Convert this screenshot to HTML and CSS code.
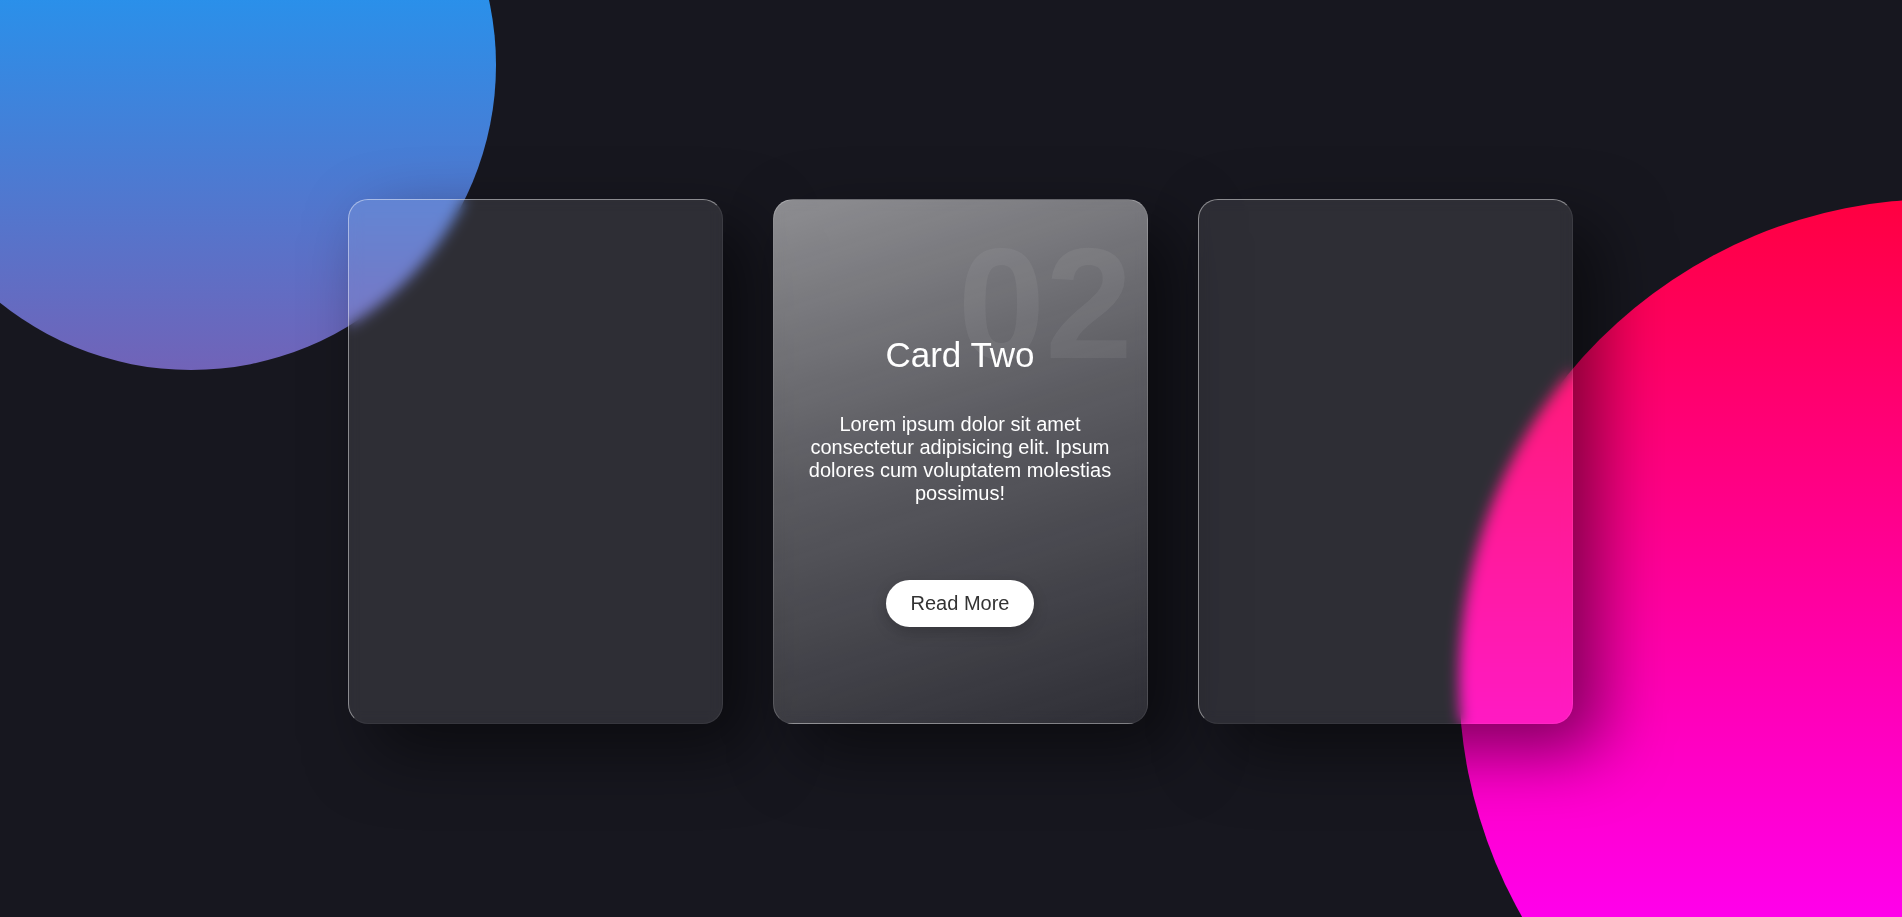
FILE: index.html
```html
<!DOCTYPE html>
<html lang="en">
<head>
<meta charset="utf-8">
<title>Glass Cards</title>
<link rel="stylesheet" href="styles.css">
</head>
<body>
  <div class="blob blob-blue"></div>
  <div class="blob blob-pink"></div>
  <main class="stage">
    <div class="cards">
      <div class="card"></div>
      <div class="card card-active">
        <span class="card-num">02</span>
        <h3 class="card-title">Card Two</h3>
        <p class="card-text">Lorem ipsum dolor sit amet consectetur adipisicing elit. Ipsum dolores cum voluptatem molestias possimus!</p>
        <a class="card-btn" href="#">Read More</a>
      </div>
      <div class="card"></div>
    </div>
  </main>
</body>
</html>
```

FILE: styles.css
```css
* {
  box-sizing: border-box;
}

html, body {
  margin: 0;
  padding: 0;
  height: 100%;
}

body {
  background: #17171f;
  font-family: "Liberation Sans", Arial, sans-serif;
  overflow: hidden;
  position: relative;
}

.blob {
  position: absolute;
  border-radius: 50%;
  z-index: 0;
}

.blob-blue {
  left: -114px;
  top: -240px;
  width: 610px;
  height: 610px;
  background: linear-gradient(to bottom, #2a90ea 0%, #2a90ea 39%, #7163b8 100%);
}

.blob-pink {
  left: 1459px;
  top: 199px;
  width: 960px;
  height: 960px;
  background: linear-gradient(to bottom, #ff0040 0%, #ff00f2 78%, #ff00ff 100%);
}

.stage {
  position: relative;
  z-index: 1;
  height: 100vh;
  display: flex;
  align-items: center;
  justify-content: center;
  padding: 6px 0 0 18px;
}

.cards {
  display: flex;
  gap: 50px;
}

.card {
  position: relative;
  width: 375px;
  height: 525px;
  border-radius: 20px;
  background: rgba(255, 255, 255, 0.1);
  border-top: 1px solid rgba(255, 255, 255, 0.45);
  border-left: 1px solid rgba(255, 255, 255, 0.45);
  border-right: 1px solid rgba(255, 255, 255, 0.08);
  border-bottom: 1px solid rgba(255, 255, 255, 0.05);
  box-shadow: 27px 27px 67px rgba(0, 0, 0, 0.5);
  backdrop-filter: blur(7px);
  -webkit-backdrop-filter: blur(7px);
  display: flex;
  flex-direction: column;
  align-items: center;
  padding: 135px 27px 0;
  text-align: center;
  overflow: hidden;
}

.card-active {
  background:
    linear-gradient(162deg, rgba(255, 255, 255, 0.46) 0%, rgba(255, 255, 255, 0.22) 45%, rgba(255, 255, 255, 0) 100%),
    rgba(255, 255, 255, 0.1);
  border-top-color: rgba(255, 255, 255, 0.25);
  border-left-color: rgba(255, 255, 255, 0.2);
}

.card-num {
  position: absolute;
  top: 25px;
  right: 14px;
  font-size: 157px;
  line-height: 1;
  font-weight: 700;
  color: rgba(255, 255, 255, 0.06);
  pointer-events: none;
}

.card-title {
  position: relative;
  margin: 0;
  font-size: 35px;
  line-height: 40px;
  font-weight: 400;
  color: #fff;
}

.card-text {
  margin: 38px 0 0;
  font-size: 20px;
  line-height: 23px;
  color: #fff;
  font-weight: 400;
}

.card-btn {
  display: inline-block;
  margin-top: 75px;
  padding: 12px 25px;
  font-size: 20px;
  line-height: 23px;
  color: #333;
  background: #fff;
  border-radius: 24px;
  text-decoration: none;
  box-shadow: 0 5px 15px rgba(0, 0, 0, 0.2);
}
```
